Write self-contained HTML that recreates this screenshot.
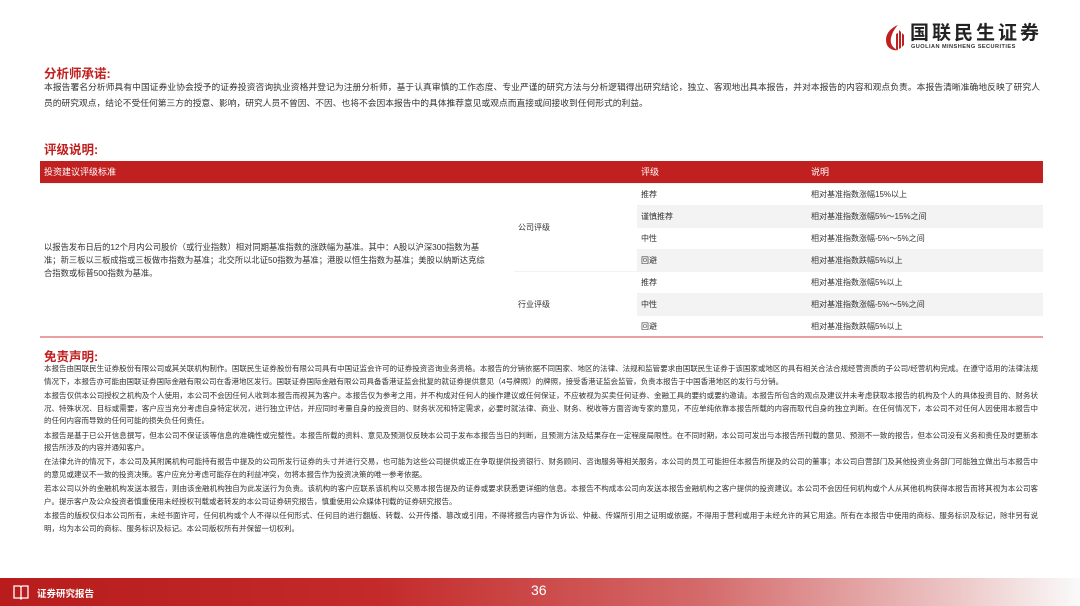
<!DOCTYPE html>
<html><head><meta charset="utf-8"><style>
*{margin:0;padding:0;box-sizing:border-box}
body{width:1080px;height:606px;background:#fff;position:relative;overflow:hidden;font-family:"Liberation Sans","Noto Sans CJK SC",sans-serif;color:#333}
.h{position:absolute;left:44px;color:#c0201f;font-weight:bold;font-size:12.5px}
.p{position:absolute;left:44px;width:996px;font-size:8.75px;line-height:16px;color:#333;text-align:justify}
.d{position:absolute;left:44px;width:994px;font-size:7.5px;line-height:12.8px;color:#333;text-align:justify}
.d div{margin-bottom:1.3px}
table{position:absolute;left:40px;top:161px;width:1003px;border-collapse:collapse;font-size:8px}
td,th{padding:0 4px;text-align:left;font-weight:normal}
th{background:#c0201f;color:#fff;height:22px;font-size:9px}
td{height:22px;border-top:1px solid #f2f2f2}
tr.g td.c{background:#f3f3f3}
</style></head><body>
<svg style="position:absolute;left:884px;top:24px" width="22" height="27" viewBox="0 0 22 27"><path d="M14 1 C4 5 0 13 3 21 C5 25 10 27 14 26 C8 24 6 19 7 14 C8 9 11 4 14 1Z" fill="#c0201f"/><path d="M15 6 L15 25 L17 24 L17 8Z M18 9 L18 23 L20 21 L20 11Z M12 10 L12 25 L14 26 L14 9Z" fill="#c0201f"/></svg>
<div style="position:absolute;left:910px;top:24px;font-size:19px;line-height:19px;font-weight:bold;color:#222;letter-spacing:3px">国联民生证券</div>
<div style="position:absolute;left:911px;top:44px;font-size:5.6px;line-height:6px;font-weight:bold;color:#333;letter-spacing:0.45px">GUOLIAN MINSHENG SECURITIES</div>

<div class="h" style="top:63px">分析师承诺:</div>
<div class="p" style="top:79px">本报告署名分析师具有中国证券业协会授予的证券投资咨询执业资格并登记为注册分析师，基于认真审慎的工作态度、专业严谨的研究方法与分析逻辑得出研究结论，独立、客观地出具本报告，并对本报告的内容和观点负责。本报告清晰准确地反映了研究人员的研究观点，结论不受任何第三方的授意、影响，研究人员不曾因、不因、也将不会因本报告中的具体推荐意见或观点而直接或间接收到任何形式的利益。</div>

<div class="h" style="top:139px">评级说明:</div>
<table>
<tr><th style="width:474px">投资建议评级标准</th><th style="width:123px"></th><th style="width:170px">评级</th><th>说明</th></tr>
<tr><td rowspan="7" style="font-size:8.3px;line-height:13px;padding-right:24px">以报告发布日后的12个月内公司股价（或行业指数）相对同期基准指数的涨跌幅为基准。其中：A股以沪深300指数为基准；新三板以三板成指或三板做市指数为基准；北交所以北证50指数为基准；港股以恒生指数为基准；美股以纳斯达克综合指数或标普500指数为基准。</td><td rowspan="4">公司评级</td><td class="c">推荐</td><td class="c">相对基准指数涨幅15%以上</td></tr>
<tr class="g"><td class="c">谨慎推荐</td><td class="c">相对基准指数涨幅5%～15%之间</td></tr>
<tr><td class="c">中性</td><td class="c">相对基准指数涨幅-5%～5%之间</td></tr>
<tr class="g"><td class="c">回避</td><td class="c">相对基准指数跌幅5%以上</td></tr>
<tr><td rowspan="3">行业评级</td><td class="c">推荐</td><td class="c">相对基准指数涨幅5%以上</td></tr>
<tr class="g"><td class="c">中性</td><td class="c">相对基准指数涨幅-5%～5%之间</td></tr>
<tr><td class="c">回避</td><td class="c">相对基准指数跌幅5%以上</td></tr>
</table>
<div style="position:absolute;left:40px;top:336px;width:1003px;height:2px;background:#e8a0a0"></div>

<div class="h" style="top:346px">免责声明:</div>
<div class="d" style="top:363px">
<div>本报告由国联民生证券股份有限公司或其关联机构制作。国联民生证券股份有限公司具有中国证监会许可的证券投资咨询业务资格。本报告的分销依据不同国家、地区的法律、法规和监管要求由国联民生证券于该国家或地区的具有相关合法合规经营资质的子公司/经营机构完成。在遵守适用的法律法规情况下，本报告亦可能由国联证券国际金融有限公司在香港地区发行。国联证券国际金融有限公司具备香港证监会批复的就证券提供意见（4号牌照）的牌照，接受香港证监会监管，负责本报告于中国香港地区的发行与分销。</div>
<div>本报告仅供本公司授权之机构及个人使用，本公司不会因任何人收到本报告而视其为客户。本报告仅为参考之用，并不构成对任何人的操作建议或任何保证，不应被视为买卖任何证券、金融工具的要约或要约邀请。本报告所包含的观点及建议并未考虑获取本报告的机构及个人的具体投资目的、财务状况、特殊状况、目标或需要，客户应当充分考虑自身特定状况，进行独立评估，并应同时考量自身的投资目的、财务状况和特定需求，必要时就法律、商业、财务、税收等方面咨询专家的意见，不应单纯依靠本报告所载的内容而取代自身的独立判断。在任何情况下，本公司不对任何人因使用本报告中的任何内容而导致的任何可能的损失负任何责任。</div>
<div>本报告是基于已公开信息撰写，但本公司不保证该等信息的准确性或完整性。本报告所载的资料、意见及预测仅反映本公司于发布本报告当日的判断，且预测方法及结果存在一定程度局限性。在不同时期，本公司可发出与本报告所刊载的意见、预测不一致的报告，但本公司没有义务和责任及时更新本报告所涉及的内容并通知客户。</div>
<div>在法律允许的情况下，本公司及其附属机构可能持有报告中提及的公司所发行证券的头寸并进行交易，也可能为这些公司提供或正在争取提供投资银行、财务顾问、咨询服务等相关服务，本公司的员工可能担任本报告所提及的公司的董事；本公司自营部门及其他投资业务部门可能独立做出与本报告中的意见或建议不一致的投资决策。客户应充分考虑可能存在的利益冲突，勿将本报告作为投资决策的唯一参考依据。</div>
<div>若本公司以外的金融机构发送本报告，则由该金融机构独自为此发送行为负责。该机构的客户应联系该机构以交易本报告提及的证券或要求获悉更详细的信息。本报告不构成本公司向发送本报告金融机构之客户提供的投资建议。本公司不会因任何机构或个人从其他机构获得本报告而将其视为本公司客户。提示客户及公众投资者慎重使用未经授权刊载或者转发的本公司证券研究报告，慎重使用公众媒体刊载的证券研究报告。</div>
<div>本报告的版权仅归本公司所有，未经书面许可，任何机构或个人不得以任何形式、任何目的进行翻版、转载、公开传播、篡改或引用，不得将报告内容作为诉讼、仲裁、传媒所引用之证明或依据，不得用于营利或用于未经允许的其它用途。所有在本报告中使用的商标、服务标识及标记，除非另有说明，均为本公司的商标、服务标识及标记。本公司版权所有并保留一切权利。</div>
</div>

<div style="position:absolute;left:0;top:578px;width:1080px;height:28px;background:linear-gradient(90deg,#b81c1c 0%,#c42a2a 35%,#d46a6a 65%,#ecc4c4 88%,#fafafa 100%)"></div>
<svg style="position:absolute;left:12px;top:583px" width="18" height="18" viewBox="0 0 18 18"><path d="M2 3 L8 3 L9 4 L10 3 L16 3 L16 15 L10 15 L9 16 L8 15 L2 15Z M9 4 L9 16" fill="none" stroke="#fff" stroke-width="1.3"/></svg>
<div style="position:absolute;left:37px;top:586px;color:#fff;font-size:9.5px;font-weight:bold">证券研究报告</div>
<div style="position:absolute;left:531px;top:582px;color:#fff;font-size:14px">36</div>
</body></html>
